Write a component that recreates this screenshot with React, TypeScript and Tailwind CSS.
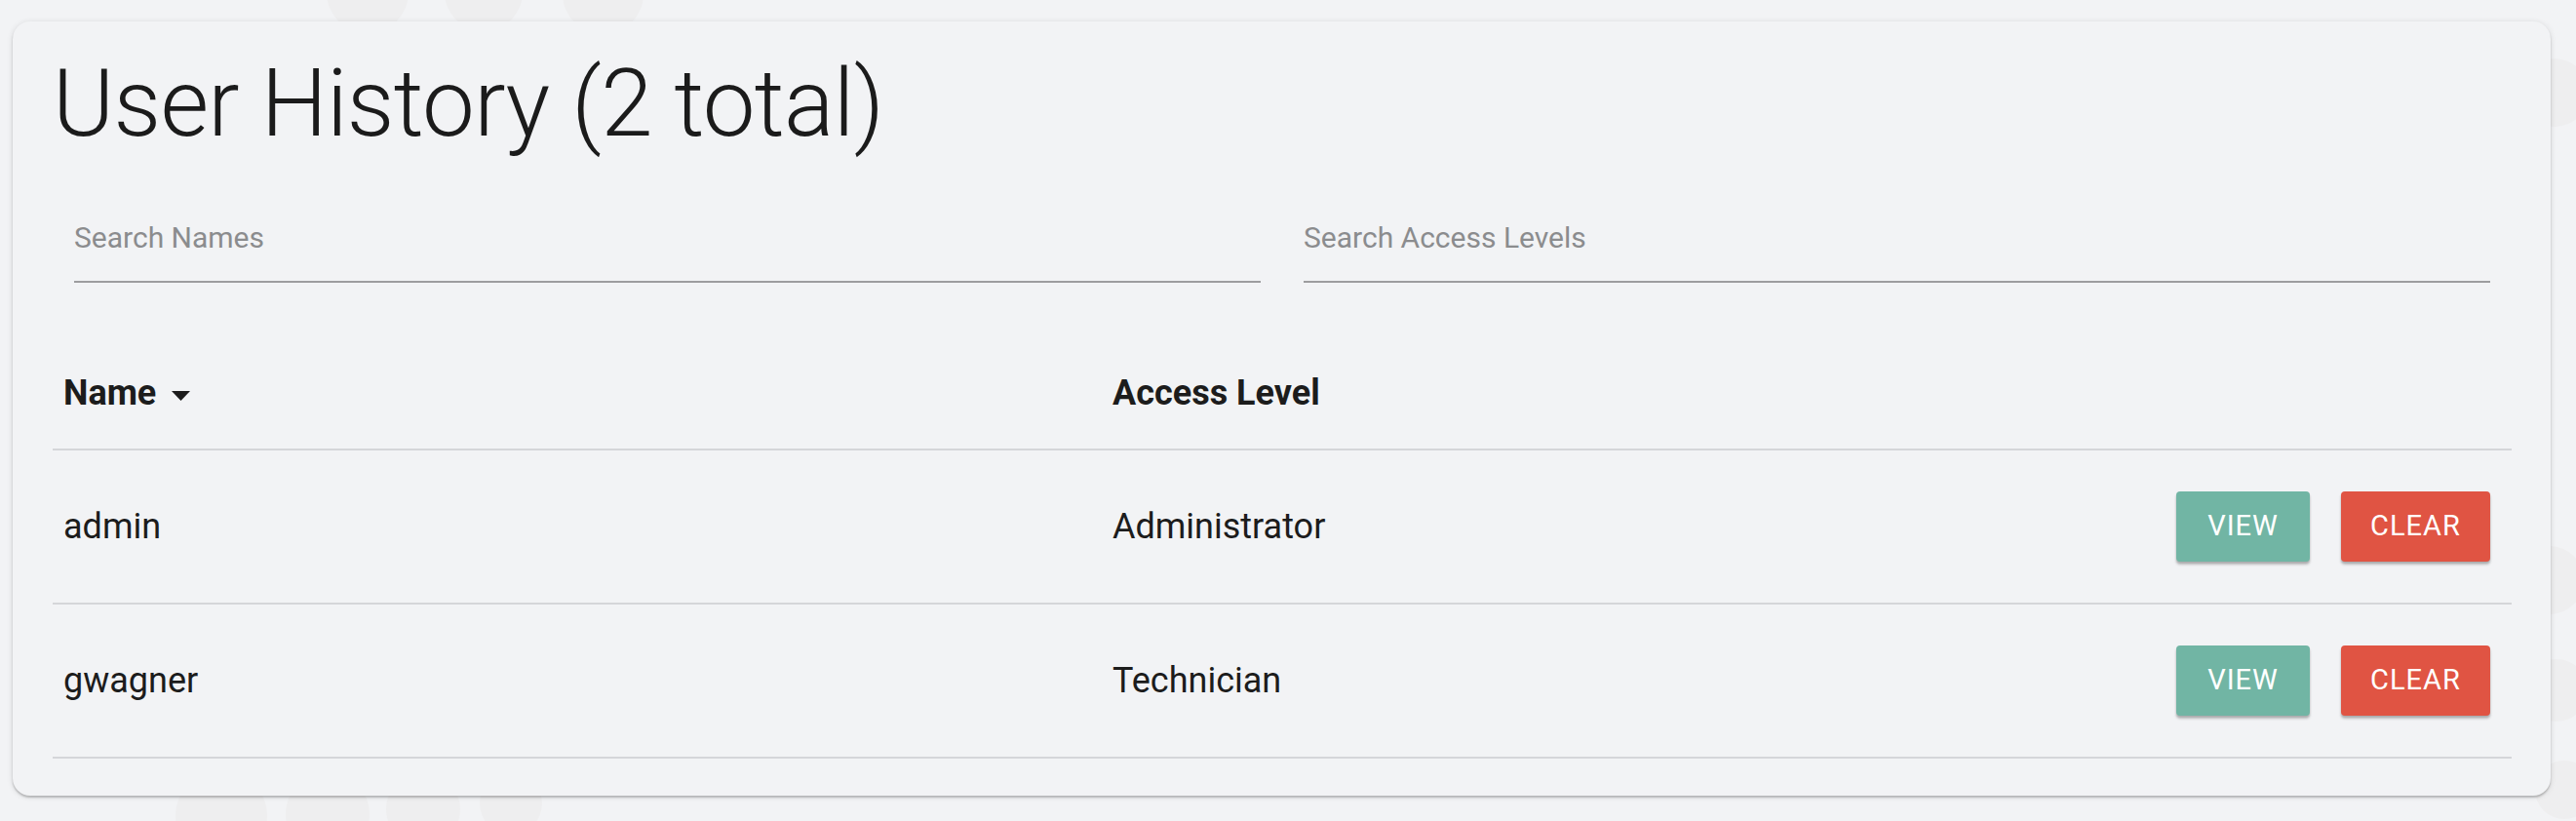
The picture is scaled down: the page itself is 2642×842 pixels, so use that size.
import React from 'react'

interface Row {
  name: string
  level: string
}

const rows: Row[] = [
  { name: 'admin', level: 'Administrator' },
  { name: 'gwagner', level: 'Technician' },
]

// faint bubbles behind the card
const bubbles = [
  { x: 335, y: -50, s: 84 },
  { x: 456, y: -48, s: 80 },
  { x: 577, y: -48, s: 83 },
  { x: 727, y: -42, s: 40 },
  { x: 180, y: 790, s: 94 },
  { x: 293, y: 792, s: 86 },
  { x: 396, y: 792, s: 76 },
  { x: 492, y: 792, s: 64 },
  { x: 2580, y: 560, s: 70 },
  { x: 2590, y: 676, s: 64 },
  { x: 2600, y: 780, s: 60 },
  { x: 2585, y: 60, s: 70 },
]

function SearchField({ label }: { label: string }) {
  return (
    <div className="px-[22px]">
      <div className="border-b-2 border-[#9d9d9f] pb-[26px] text-[30px] leading-[36px] text-[#8b8c8e]">
        {label}
      </div>
    </div>
  )
}

export default function App() {
  return (
    <div className="relative min-h-[842px] overflow-hidden bg-[#f2f3f5] font-['Roboto','Noto_Sans',sans-serif]">
      {bubbles.map((b, i) => (
        <div
          key={i}
          className="absolute rounded-full bg-[#eeeeef]"
          style={{ left: b.x, top: b.y, width: b.s, height: b.s }}
        />
      ))}

      <div className="relative px-[13px] pt-[22px]">
        <div className="w-[2603px] rounded-[18px] bg-[#f2f3f5] pb-[38px] pl-[41px] pr-[40px] pt-[27px] shadow-[0_2px_2px_rgba(0,0,0,0.2),0_1px_6px_rgba(0,0,0,0.12)]">
          <h1 className="text-[96px] font-light leading-[115px] tracking-[-0.7px] text-[#1b1b1b]">
            User History (2 total)
          </h1>

          <div className="mt-[62px] grid grid-cols-2">
            <SearchField label="Search Names" />
            <SearchField label="Search Access Levels" />
          </div>

          <div className="mt-[55px] text-[36px] text-[#1c1c1c]">
            <div className="flex h-[117px] items-center border-b-2 border-[#d5d6d9] font-bold">
              <div className="flex w-[1076px] items-center pl-[11px]">
                <span>Name</span>
                <svg className="ml-[16px] mt-[6px]" width="19" height="10" viewBox="0 0 19 10">
                  <path d="M0 0h19L9.5 10z" fill="#1c1c1c" />
                </svg>
              </div>
              <div className="flex-1 pl-[11px]">Access Level</div>
            </div>

            {rows.map((r) => (
              <div key={r.name} className="flex h-[158px] items-center border-b-2 border-[#d5d6d9]">
                <div className="w-[1076px] pl-[11px]">{r.name}</div>
                <div className="flex-1 pl-[11px]">{r.level}</div>
                <div className="flex gap-[32px] pr-[22px]">
                  <button className="h-[72px] w-[137px] rounded-[4px] bg-[#71b5a4] text-[29px] tracking-[1px] text-white shadow-[0_3px_3px_rgba(0,0,0,0.2),0_2px_2px_rgba(0,0,0,0.12)]">
                    VIEW
                  </button>
                  <button className="h-[72px] w-[153px] rounded-[4px] bg-[#e05443] text-[29px] tracking-[1px] text-white shadow-[0_3px_3px_rgba(0,0,0,0.2),0_2px_2px_rgba(0,0,0,0.12)]">
                    CLEAR
                  </button>
                </div>
              </div>
            ))}
          </div>
        </div>
      </div>
    </div>
  )
}
